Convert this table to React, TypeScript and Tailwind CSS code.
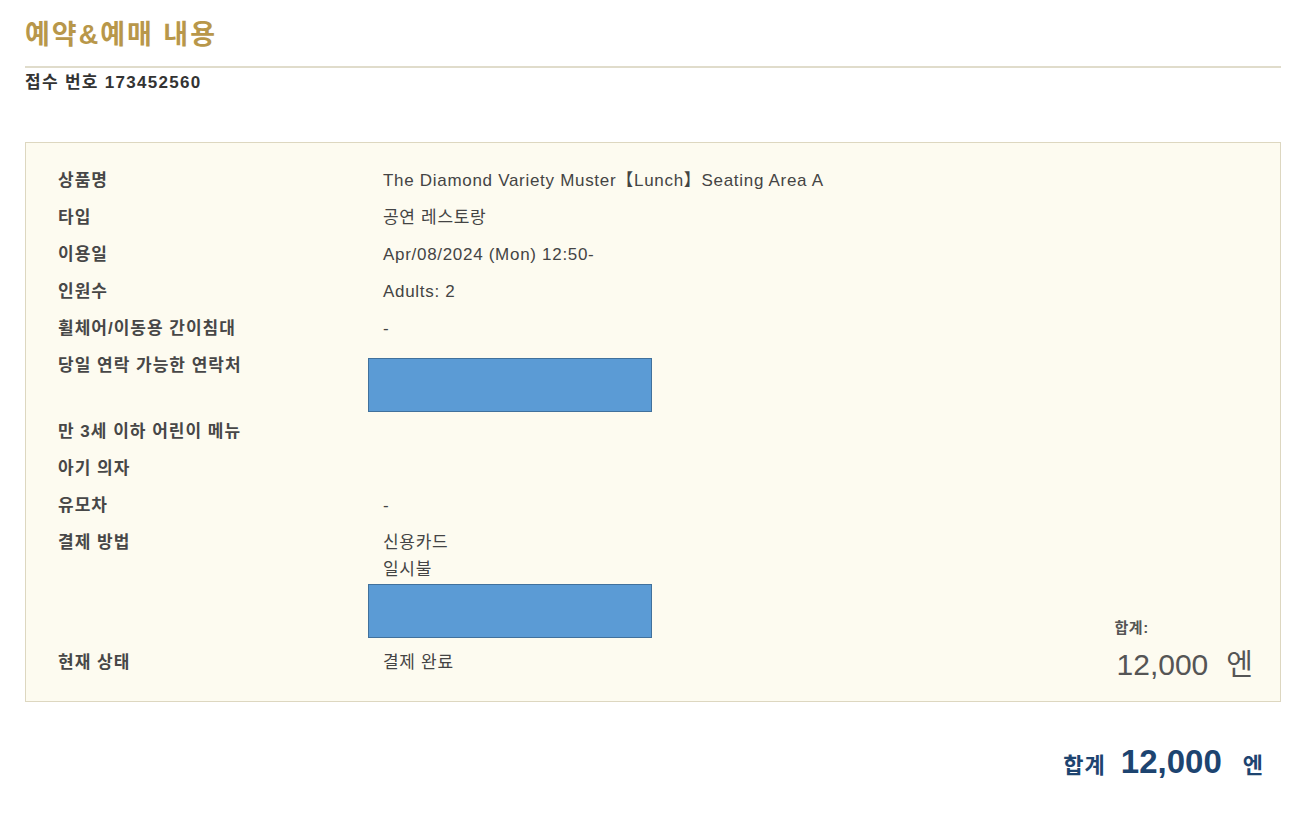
const ROWS_TOP = [
  { label: "상품명", value: "The Diamond Variety Muster【Lunch】Seating Area A" },
  { label: "타입", value: "공연 레스토랑" },
  { label: "이용일", value: "Apr/08/2024 (Mon) 12:50-" },
  { label: "인원수", value: "Adults: 2" },
  { label: "휠체어/이동용 간이침대", value: "-" },
];

const ROWS_MID = [
  { label: "만 3세 이하 어린이 메뉴", value: "" },
  { label: "아기 의자", value: "" },
  { label: "유모차", value: "-" },
];

const FONT = "[font-family:'Liberation_Sans','Noto_Sans_CJK_KR',sans-serif]";

function Redacted() {
  return <div className="-ml-[15px] h-[54px] w-[284px] border border-[#41719c] bg-[#5b9bd5]" />;
}

function Row({ label, children, className = "" }: { label: string; children?: React.ReactNode; className?: string }) {
  return (
    <div className={`flex items-start ${className}`}>
      <div className="w-[325px] shrink-0 text-[17px] leading-[20px] font-bold tracking-[1px] text-[#474747]">{label}</div>
      <div className="text-[17px] leading-[20px] tracking-[0.7px] text-[#444]">{children}</div>
    </div>
  );
}

export default function App() {
  return (
    <div className={`min-h-[824px] bg-white pt-[18px] pr-[19px] pl-[25px] ${FONT}`}>
      <h1 className="pb-[14px] text-[27px] leading-[34px] font-bold tracking-[2px] text-[#b8974a]">예약&예매 내용</h1>
      <div className="h-[2px] bg-[#e0dccb]" />
      <p className="mt-[4px] text-[17px] leading-[22px] font-bold tracking-[1.3px] text-[#333]">접수 번호 173452560</p>

      <div className="mt-[48px] flex border border-[#ddd7c0] bg-[#fdfbf0] pr-[27px] pb-[19px] pl-[32px] pt-[19.5px]">
        <div className="flex-1">
          {ROWS_TOP.map((r) => (
            <Row key={r.label} label={r.label} className="h-[37px] pt-[8.5px]">
              {r.value}
            </Row>
          ))}
          <Row label="당일 연락 가능한 연락처" className="h-[66px] pt-[8.5px]">
            <div className="mt-[1.5px]">
              <Redacted />
            </div>
          </Row>
          {ROWS_MID.map((r) => (
            <Row key={r.label} label={r.label} className="h-[37px] pt-[8.5px]">
              {r.value}
            </Row>
          ))}
          <Row label="결제 방법" className="h-[120px] pt-[8.5px]">
            <div>신용카드</div>
            <div className="mt-[7px]">일시불</div>
            <div className="mt-[3.5px]">
              <Redacted />
            </div>
          </Row>
          <Row label="현재 상태" className="h-[37px] pt-[8.5px]">
            결제 완료
          </Row>
        </div>
        <div className="self-end">
          <div className="text-[15px] leading-[20px] font-bold tracking-[0.5px] text-[#555]">합계:</div>
          <div className="mt-[10px] pl-[2px] text-[30px] leading-[34px] text-[#555]">
            12,000<span className="ml-[18px] text-[29px]">엔</span>
          </div>
        </div>
      </div>

      <div className="mt-[35px] flex items-baseline justify-end pr-[18px] text-[#1d4470]">
        <span className="text-[22px] font-bold tracking-[1px]">합계</span>
        <span className="ml-[15px] text-[33px] font-bold">12,000</span>
        <span className="ml-[21px] text-[22px] font-bold">엔</span>
      </div>
    </div>
  );
}
